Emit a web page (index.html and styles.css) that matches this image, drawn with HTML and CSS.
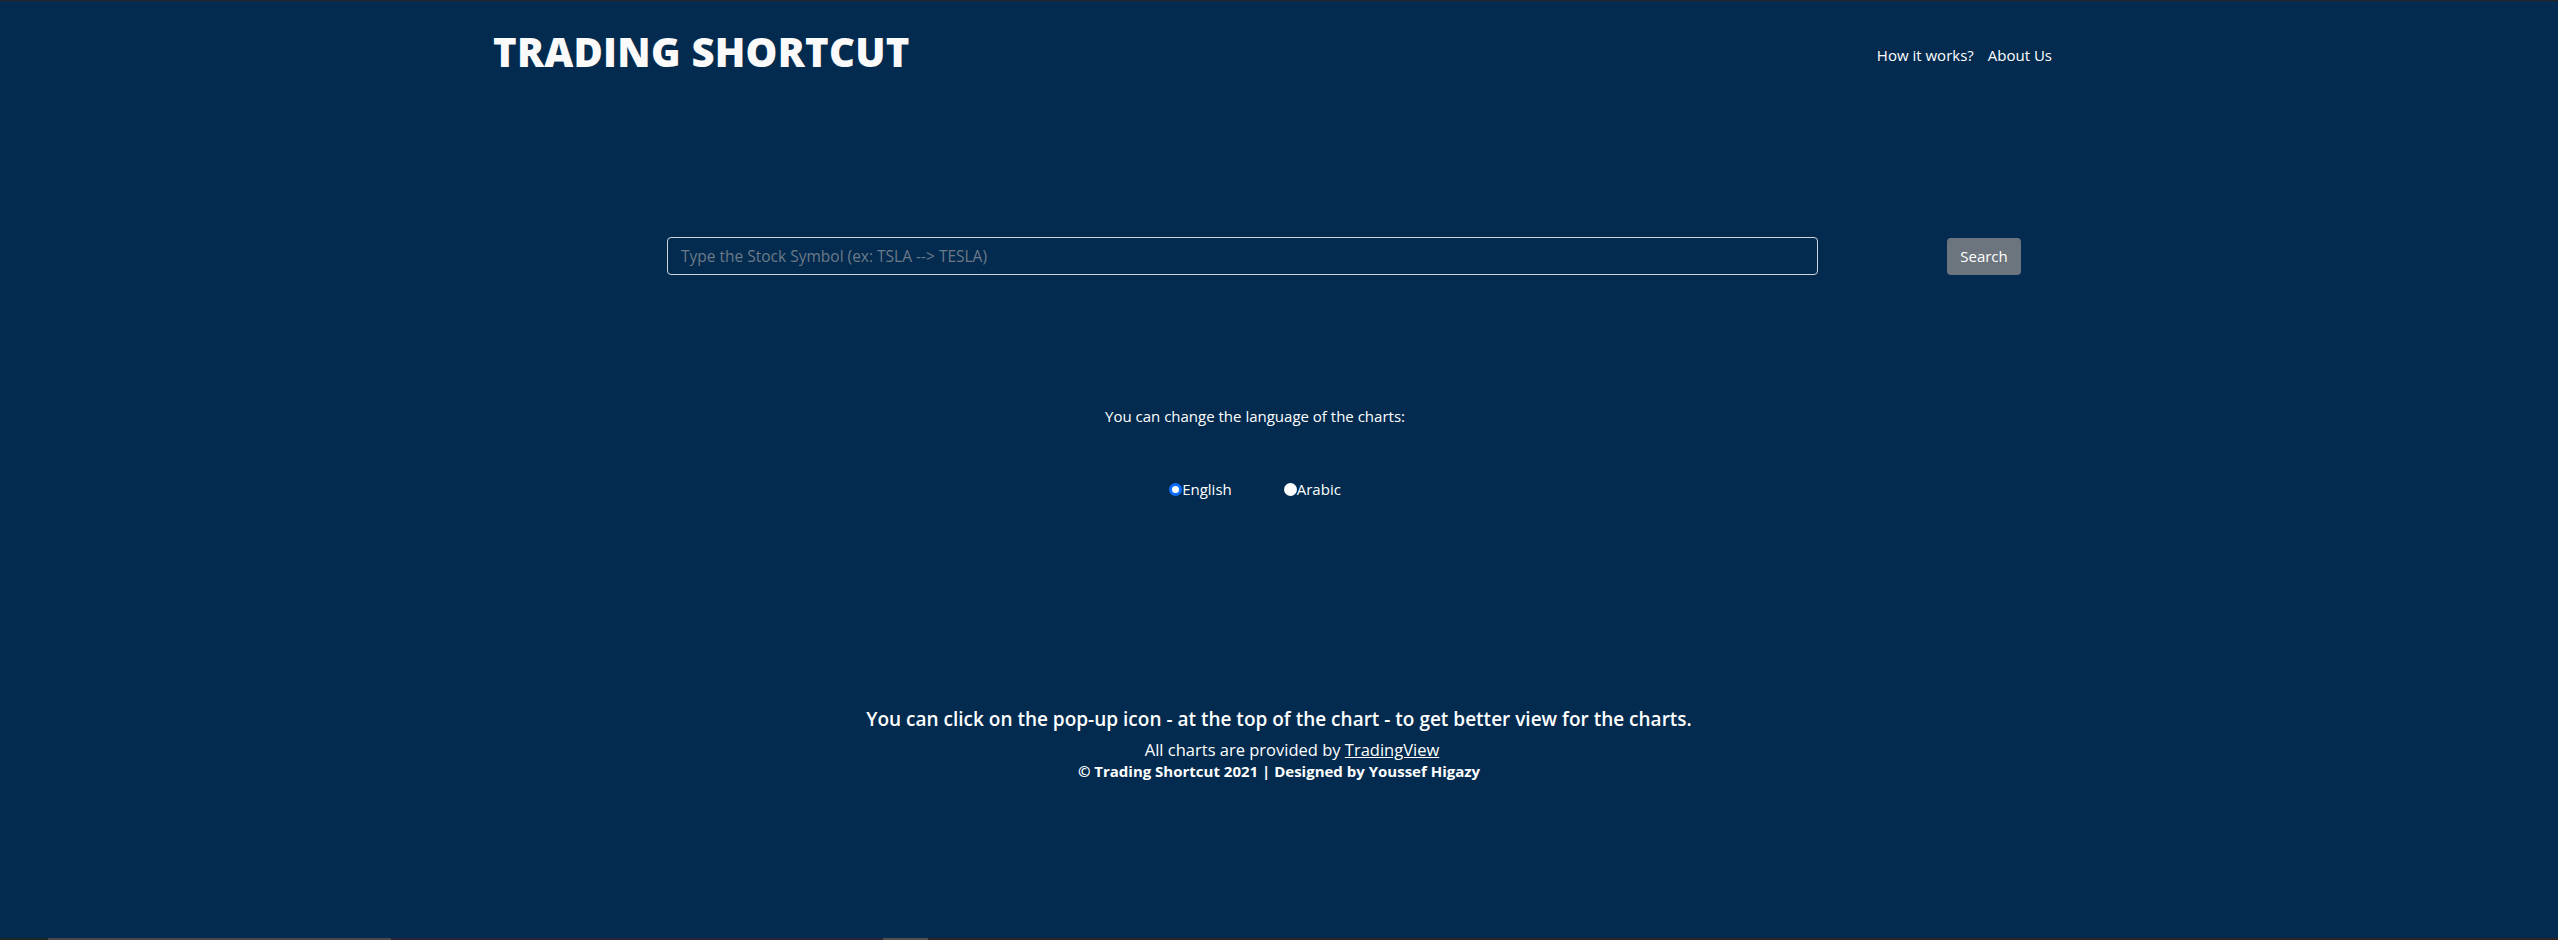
FILE: index.html
```html
<!DOCTYPE html>
<html lang="en">
<head>
<meta charset="utf-8">
<title>Trading Shortcut</title>
<link rel="stylesheet" href="styles.css">
</head>
<body>
<div class="page">
  <header class="header">
    <h1 class="brand">TRADING SHORTCUT</h1>
    <nav class="nav">
      <a class="nav-link" href="#">How it works?</a>
      <a class="nav-link" href="#">About Us</a>
    </nav>
  </header>

  <main class="main">
    <form class="search-row">
      <input class="search-input" type="text" placeholder="Type the Stock Symbol (ex: TSLA --> TESLA)">
      <button class="search-btn" type="button">Search</button>
    </form>

    <section class="lang">
      <p class="lang-text">You can change the language of the charts:</p>
      <div class="radios">
        <label class="radio"><span class="dot checked"></span>English</label>
        <label class="radio"><span class="dot"></span>Arabic</label>
      </div>
    </section>
  </main>

  <footer class="footer">
    <p class="tip">You can click on the pop-up icon - at the top of the chart - to get better view for the charts.</p>
    <p class="credit">All charts are provided by <a href="#" class="tv">TradingView</a></p>
    <p class="copy">© Trading Shortcut 2021 | Designed by <strong>Youssef Higazy</strong></p>
  </footer>
</div>
<div class="taskbar">
  <span class="tb a"></span><span class="tb b"></span><span class="tb c"></span><span class="tb d"></span><span class="tb e"></span>
</div>
</body>
</html>
```

FILE: styles.css
```css
* { box-sizing: border-box; }
html, body { margin: 0; padding: 0; }
body {
  background: #022b4f;
  color: #ffffff;
  font-family: "Open Sans", "Noto Sans", sans-serif;
  height: 940px;
  overflow: hidden;
  border-top: 1px solid #2a2523;
}
.page {
  height: 937px;
  display: flex;
  flex-direction: column;
}
.header {
  display: flex;
  justify-content: space-between;
  align-items: flex-start;
  padding: 0 506px 0 493px;
}
.brand {
  margin: 31px 0 0 0;
  font-size: 40px;
  line-height: 1;
  font-weight: 800;
  letter-spacing: 0.25px;
  color: #fafafa;
}
.nav {
  display: flex;
  gap: 14px;
  margin-top: 43px;
}
.nav-link {
  color: #ffffff;
  text-decoration: none;
  font-size: 15px;
  line-height: 22px;
}
.main {
  display: flex;
  flex-direction: column;
  align-items: stretch;
}
.search-row {
  display: flex;
  align-items: center;
  margin: 165px 0 0 667px;
  gap: 129px;
}
.search-input {
  width: 1151px;
  height: 38px;
  background: transparent;
  border: 1.5px solid #cfd6de;
  border-radius: 4px;
  padding: 0 13px;
  font-family: inherit;
  font-size: 15.5px;
  color: #fff;
  outline: none;
}
.search-input::placeholder { color: #6c7a88; }
.search-btn {
  width: 74px;
  height: 37px;
  background: #6c757d;
  border: none;
  border-radius: 4px;
  color: #fff;
  font-family: inherit;
  font-size: 15px;
  padding: 0;
}
.lang {
  display: flex;
  flex-direction: column;
  align-items: center;
  padding-right: 48px;
}
.lang-text {
  margin: 130px 0 0 0;
  font-size: 15px;
  line-height: 22px;
}
.radios {
  display: flex;
  gap: 52px;
  margin-top: 51px;
}
.radio {
  display: flex;
  align-items: center;
  font-size: 15px;
  line-height: 22px;
}
.dot {
  width: 13px;
  height: 13px;
  border-radius: 50%;
  background: #fff;
  margin-top: 1px;
}
.dot.checked {
  background: #fff;
  border: 3px solid #0d6efd;
}
.footer {
  margin-top: 205px;
  text-align: center;
}
.footer p { margin: 0; }
.tip {
  font-size: 19px;
  font-weight: 600;
  line-height: 28px;
}
.credit {
  margin-top: 6px !important;
  padding-left: 26px;
  font-size: 16.5px;
  line-height: 22px;
}
.tv { color: #fff; text-decoration: underline; }
.copy {
  font-size: 15px;
  line-height: 21px;
  font-weight: 700;
}
.copy strong { font-weight: 700; }
.taskbar {
  display: flex;
  height: 2px;
  background: #2b2424;
}
.tb { height: 2px; display: block; }
.tb.a { width: 48px; background: #1e2a20; }
.tb.b { width: 343px; background: #4a4a4a; }
.tb.c { width: 492px; background: #2a2438; }
.tb.d { width: 45px; background: #545050; }
.tb.e { flex: 1; background: #2e2422; }
```
